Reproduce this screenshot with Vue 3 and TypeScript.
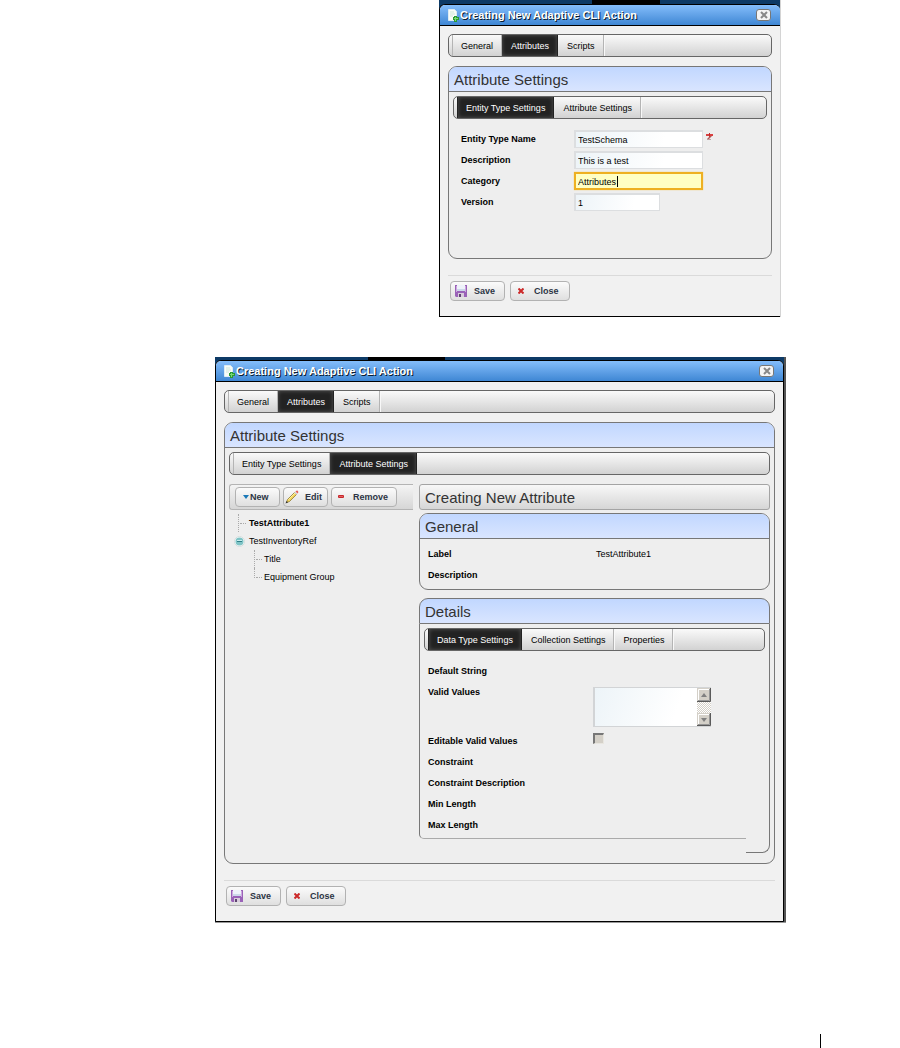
<script setup lang="ts">
import { ref } from 'vue'

interface Field {
  id: string
  label: string
  value: string
  kind?: 'focus' | 'short'
  required?: boolean
}

const mainTabs = ['General', 'Attributes', 'Scripts']
const settingTabs = ['Entity Type Settings', 'Attribute Settings']
const detailTabs = ['Data Type Settings', 'Collection Settings', 'Properties']

const firstTab = ref(1)
const firstSub = ref(0)
const secondTab = ref(1)
const secondSub = ref(1)
const detailTab = ref(0)

const fields = ref<Field[]>([
  { id: 'entity-name', label: 'Entity Type Name', value: 'TestSchema', required: true },
  { id: 'entity-desc', label: 'Description', value: 'This is a test' },
  { id: 'entity-cat', label: 'Category', value: 'Attributes', kind: 'focus' },
  { id: 'entity-ver', label: 'Version', value: '1', kind: 'short' },
])

const validValues = ref('')
const trailing = ['Constraint', 'Constraint Description', 'Min Length', 'Max Length']
</script>

<template>
  <main class="page">
    <section class="shot shot-a">
      <div class="dialog">
        <header class="titlebar">
          <svg class="doc" viewBox="0 0 12 14" aria-hidden="true">
            <path d="M1.500 1.500h6l2 2v9h-8z" fill="#f8fcf8" stroke="#dcecf4" />
            <path d="M3 4h4M3 6h5M3 8h3" stroke="#cfe6da" />
            <path d="M8.500 8v6M6 10.500h6" stroke="#2a9a34" stroke-width="3" />
            <path d="M8.500 9v4M7 10.500h4" stroke="#7ada78" />
          </svg>
          <h1>Creating New Adaptive CLI Action</h1>
          <button class="x" type="button" aria-label="Close window">
            <svg viewBox="0 0 8 8"><path d="M1 1l6 6M7 1l-6 6" stroke="#888" stroke-width="2" /></svg>
          </button>
        </header>
        <div class="content">
          <div class="tabs" role="tablist">
            <button v-for="(t, i) in mainTabs" :key="t" type="button" role="tab" :class="{ on: i === firstTab }" :aria-selected="i === firstTab" @click="firstTab = i">{{ t }}</button>
          </div>
          <section class="panel">
            <h2>Attribute Settings</h2>
            <div class="inset">
              <div class="tabs" role="tablist">
                <button v-for="(t, i) in settingTabs" :key="t" type="button" role="tab" :class="{ on: i === firstSub }" :aria-selected="i === firstSub" @click="firstSub = i">{{ t }}</button>
              </div>
              <form class="form" @submit.prevent>
                <div v-for="f in fields" :key="f.id" class="field">
                  <label :for="f.id">{{ f.label }}</label>
                  <span class="entry" :class="f.kind">
                    <input :id="f.id" v-model="f.value" type="text" />
                    <i v-if="f.kind === 'focus'" class="caret"></i>
                  </span>
                  <svg v-if="f.required" class="req" viewBox="0 0 7 8" aria-hidden="true">
                    <path d="M0 1h7v2H0z" fill="#d84040" />
                    <path d="M3 0h1v4H3z" fill="#c02828" />
                    <path d="M4 3h2L3 6H1z" fill="#b05858" />
                    <path d="M1 6h4v1H1z" fill="#c0a0a0" />
                  </svg>
                </div>
              </form>
            </div>
          </section>
          <footer class="actions">
            <button class="btn save" type="button">
              <svg viewBox="0 0 12 12" aria-hidden="true"><path d="M0 0h12v12H1L0 11z" fill="#9a62b8" /><path d="M1 1h1v6H1zM10 1h1v6h-1z" fill="#cfa8e0" /><path d="M2 0h8v6H2z" fill="#eef2fa" /><path d="M2 4h8v2H2z" fill="#ccd8ea" /><path d="M3 8h6v4H3z" fill="#d8ccdc" /><path d="M4 9h2v3H4z" fill="#5e4470" /></svg>Save
            </button>
            <button class="btn close" type="button">
              <svg viewBox="0 0 6 6" aria-hidden="true"><path d="M0.500 0.500l5 5M5.500 0.500l-5 5" stroke="#cc2929" stroke-width="2" /></svg>Close
            </button>
          </footer>
        </div>
      </div>
    </section>

    <section class="shot shot-b">
      <div class="dialog">
        <header class="titlebar">
          <svg class="doc" viewBox="0 0 12 14" aria-hidden="true">
            <path d="M1.500 1.500h6l2 2v9h-8z" fill="#f8fcf8" stroke="#dcecf4" />
            <path d="M3 4h4M3 6h5M3 8h3" stroke="#cfe6da" />
            <path d="M8.500 8v6M6 10.500h6" stroke="#2a9a34" stroke-width="3" />
            <path d="M8.500 9v4M7 10.500h4" stroke="#7ada78" />
          </svg>
          <h1>Creating New Adaptive CLI Action</h1>
          <button class="x" type="button" aria-label="Close window">
            <svg viewBox="0 0 8 8"><path d="M1 1l6 6M7 1l-6 6" stroke="#888" stroke-width="2" /></svg>
          </button>
        </header>
        <div class="content">
          <div class="tabs" role="tablist">
            <button v-for="(t, i) in mainTabs" :key="t" type="button" role="tab" :class="{ on: i === secondTab }" :aria-selected="i === secondTab" @click="secondTab = i">{{ t }}</button>
          </div>
          <section class="panel">
            <h2>Attribute Settings</h2>
            <div class="inset tall">
              <div class="tabs" role="tablist">
                <button v-for="(t, i) in settingTabs" :key="t" type="button" role="tab" :class="{ on: i === secondSub }" :aria-selected="i === secondSub" @click="secondSub = i">{{ t }}</button>
              </div>
              <div class="columns">
                <div class="side">
                  <div class="toolbar">
                    <button class="btn new" type="button">
                      <svg viewBox="0 0 6 4" aria-hidden="true"><path d="M0 0h6L3 4z" fill="#1a78b8" /></svg>New
                    </button>
                    <button class="btn edit" type="button">
                      <svg viewBox="0 0 14 14" aria-hidden="true"><path d="M1.500 12.500l1-3L9.500 2.500l2 2L4.500 11.500z" fill="#f2d45c" stroke="#8f7a34" stroke-width="0.800" /><path d="M3.500 9.500l6.500-6.500" stroke="#fff2a0" /><path d="M9.300 2.700l1.200-1.200 2 2-1.200 1.200z" fill="#d8d8e0" /><path d="M10.500 1.500Q12 0 13 1t-0.500 2.500z" fill="#e8605a" /><path d="M0.500 13.500l1-2.500 1.500 1.500z" fill="#333" /></svg>Edit
                    </button>
                    <button class="btn remove" type="button">
                      <svg viewBox="0 0 6 4" aria-hidden="true"><rect width="6" height="3" rx="1" fill="#c8282c" /><path d="M1 1.500h4" stroke="#e87070" stroke-width="0.800" /></svg>Remove
                    </button>
                  </div>
                  <ul class="tree">
                    <li class="leaf first"><b>TestAttribute1</b></li>
                    <li>
                      <div class="node">
                        <svg viewBox="0 0 11 11" aria-hidden="true"><circle cx="5.500" cy="5.500" r="5" fill="#fff" stroke="#d4dcdc" /><circle cx="5.500" cy="5.500" r="4" fill="#7fc4c6" /><path d="M3 5.500h5" stroke="#2f7f88" /><path d="M3 4.500h5" stroke="#c8eeee" /></svg>TestInventoryRef
                      </div>
                      <ul>
                        <li class="leaf">Title</li>
                        <li class="leaf last">Equipment Group</li>
                      </ul>
                    </li>
                  </ul>
                </div>
                <div class="detail">
                  <h2 class="plain">Creating New Attribute</h2>
                  <section class="panel">
                    <h2>General</h2>
                    <dl class="rows">
                      <div class="row"><dt>Label</dt><dd>TestAttribute1</dd></div>
                      <div class="row"><dt>Description</dt><dd></dd></div>
                    </dl>
                  </section>
                  <section class="stepped">
                    <h2>Details</h2>
                    <div class="stepped-tabs">
                      <div class="tabs" role="tablist">
                        <button v-for="(t, i) in detailTabs" :key="t" type="button" role="tab" :class="{ on: i === detailTab }" :aria-selected="i === detailTab" @click="detailTab = i">{{ t }}</button>
                      </div>
                    </div>
                    <div class="split">
                      <div class="split-main">
                        <div class="row"><span class="key">Default String</span></div>
                        <div class="row area">
                          <label class="key" for="valid-values">Valid Values</label>
                          <span class="box">
                            <textarea id="valid-values" v-model="validValues"></textarea>
                            <svg class="scroll" viewBox="0 0 14 38" aria-hidden="true">
                              <defs><pattern id="mesh" width="2" height="2" patternUnits="userSpaceOnUse"><rect width="2" height="2" fill="#fff" /><rect width="1" height="1" fill="#d4d0c8" /><rect x="1" y="1" width="1" height="1" fill="#d4d0c8" /></pattern></defs>
                              <rect width="14" height="38" fill="url(#mesh)" />
                              <path d="M0 0h14v14H0zM0 25h14v13H0z" fill="#d4d0c8" />
                              <path d="M1.500 13V1.500H12M1.500 37V26.500H12" fill="none" stroke="#fff" />
                              <path d="M0 13.500h13.500V0M0 37.500h13.500V25" fill="none" stroke="#5a5a5a" />
                              <path d="M1 12.500h11.500V1M1 36.500h11.500V26" fill="none" stroke="#969696" />
                              <path d="M4 9h6L7 5zM4 30h6l-3 4z" fill="#808080" />
                            </svg>
                          </span>
                        </div>
                        <div class="row"><label class="key" for="editable">Editable Valid Values</label><input id="editable" class="check" type="checkbox" /></div>
                        <div v-for="t in trailing" :key="t" class="row"><span class="key">{{ t }}</span></div>
                      </div>
                      <div class="split-edge"></div>
                    </div>
                  </section>
                </div>
              </div>
            </div>
          </section>
          <footer class="actions">
            <button class="btn save" type="button">
              <svg viewBox="0 0 12 12" aria-hidden="true"><path d="M0 0h12v12H1L0 11z" fill="#9a62b8" /><path d="M1 1h1v6H1zM10 1h1v6h-1z" fill="#cfa8e0" /><path d="M2 0h8v6H2z" fill="#eef2fa" /><path d="M2 4h8v2H2z" fill="#ccd8ea" /><path d="M3 8h6v4H3z" fill="#d8ccdc" /><path d="M4 9h2v3H4z" fill="#5e4470" /></svg>Save
            </button>
            <button class="btn close" type="button">
              <svg viewBox="0 0 6 6" aria-hidden="true"><path d="M0.500 0.500l5 5M5.500 0.500l-5 5" stroke="#cc2929" stroke-width="2" /></svg>Close
            </button>
          </footer>
        </div>
      </div>
    </section>
    <div class="rule"></div>
  </main>
</template>

<style>
body { margin: 0; background: #fff; }
</style>

<style scoped>
* { box-sizing: border-box; }
.page {
  display: flex;
  flex-direction: column;
  min-height: 100vh;
  font: 9px/12px "Liberation Sans", Arial, sans-serif;
  color: #000;
}
button, input, textarea { font: inherit; color: inherit; margin: 0; }
h1, h2, ul, dl, dd { margin: 0; padding: 0; }
ul { list-style: none; }
svg { display: block; flex: none; }

.shot-a {
  margin: 0 119px 40px 439px;
  padding-top: 4px;
  border-right: 1px solid #d4d4d4;
  background: linear-gradient(90deg, #0d3a66 153px, #000 153px, #000 221px, #0d3a66 221px);
}
.shot-b {
  margin: 0 114px 0 215px;
  padding: 3px 2px 0 0;
  border-bottom: 1px solid #999;
  background: linear-gradient(90deg, #0d3a66 153px, #000 153px, #000 230px, #0d3a66 230px);
  box-shadow: inset -2px 0 #555;
}
.dialog {
  border: 1px solid #000;
  border-radius: 6px 6px 0 0;
  background: #f1f1f1;
  overflow: hidden;
}
.shot-a .dialog { border-right: 0; }
.titlebar {
  display: flex;
  align-items: center;
  height: 21px;
  padding: 0 9px 0 7px;
  border-bottom: 1px solid #000;
  background: linear-gradient(#84bdfb, #3f87d4);
}
.doc { width: 12px; height: 14px; }
h1 {
  flex: 1;
  margin-left: 1px;
  font-size: 11px;
  line-height: 14px;
  color: #fff;
  text-shadow: 1px 1px #0a1c30;
  white-space: nowrap;
}
.x {
  display: flex;
  align-items: center;
  justify-content: center;
  width: 15px;
  height: 12px;
  padding: 0;
  border: 1px solid #777;
  border-radius: 3px;
  background: #f4f4f4;
}
.x svg { width: 8px; height: 8px; }
.content { padding: 8px 8px 15px; }

.tabs {
  display: flex;
  height: 23px;
  padding-left: 3px;
  border: 1px solid #666;
  border-radius: 5px;
  background: linear-gradient(#fafafa, #d2d2d2);
}
.tabs button {
  padding: 0 8px 0 9px;
  border: 0;
  border-right: 1px solid #b4b4b4;
  box-shadow: 1px 0 #f8f8f8;
  background: none;
  white-space: nowrap;
}
.tabs button:first-child { padding-left: 8px; border-left: 1px solid #b4b4b4; }
.tabs button.on {
  color: #fff;
  border-color: #222;
  background: #222;
  box-shadow: inset 0 0 4px #555;
}

.panel { border: 1px solid #777; border-radius: 9px; background: #eee; }
.content > .panel { margin-top: 9px; }
h2 {
  height: 25px;
  padding-left: 5px;
  border-bottom: 1px solid #777;
  border-radius: 8px 8px 0 0;
  background: linear-gradient(#c1d7ff, #d9e5ff);
  font-size: 15px;
  font-weight: normal;
  line-height: 25px;
  color: #333;
  white-space: nowrap;
}
.inset { padding: 4px 4px 47px; }
.inset.tall { padding-bottom: 10px; }

.form { display: grid; gap: 3px; padding: 11px 0 0 8px; }
.field { display: flex; height: 18px; align-items: center; }
.field label { width: 113px; font-weight: bold; }
.entry { position: relative; width: 129px; height: 18px; }
.entry.short { width: 86px; }
.entry input {
  display: block;
  width: 100%;
  height: 18px;
  padding: 1px 2px 0;
  border: 2px solid #dcdee0;
  border-right-width: 1px;
  border-bottom-width: 1px;
  border-radius: 0;
  background: linear-gradient(100deg, #edf4f8, #fff 70%);
  outline: 0;
}
.entry.focus input { border: 2px solid #eeb022; background: #ffffc4; box-shadow: 0 0 1px #f0c050; }
.caret { position: absolute; left: 43px; top: 4px; width: 1px; height: 11px; background: #000; }
.req { width: 7px; height: 8px; margin: 0 0 5px 3px; }

.actions {
  display: flex;
  gap: 5px;
  margin-top: 16px;
  padding: 5px 0 0 2px;
  border-top: 1px solid #dadada;
}
.btn {
  display: flex;
  align-items: center;
  height: 20px;
  padding: 0;
  border: 1px solid #b2b2b2;
  border-radius: 4px;
  background: linear-gradient(#fbfbfb, #dfdfdf);
  font-weight: bold;
  color: #2c3444;
  white-space: nowrap;
}
.save { width: 55px; padding-left: 4px; gap: 7px; }
.save svg { width: 12px; height: 12px; }
.close { width: 60px; padding-left: 7px; gap: 10px; }
.close svg { width: 6px; height: 6px; }

.columns { display: flex; gap: 6px; margin-top: 9px; }
.side { width: 184px; flex: none; }
.detail { flex: 1; min-width: 0; }
.toolbar {
  display: flex;
  align-items: center;
  gap: 3px;
  height: 26px;
  padding-left: 5px;
  border: 1px solid #b4b4b4;
  border-right: 0;
  border-radius: 3px 0 0 3px;
  background: linear-gradient(#f4f4f4, #d6d6d6);
}
.new { width: 45px; padding-left: 7px; gap: 1px; }
.new svg { width: 6px; height: 4px; }
.edit { width: 45px; padding-left: 1px; gap: 6px; }
.edit svg { width: 14px; height: 14px; }
.remove { width: 66px; padding-left: 6px; gap: 9px; }
.remove svg { width: 6px; height: 4px; }

.tree { padding: 4px 0 0 9px; line-height: 18px; }
.tree ul { padding-left: 16px; }
.leaf { position: relative; height: 18px; padding-left: 11px; }
.tree ul .leaf { padding-left: 10px; }
.leaf::before {
  content: "";
  position: absolute;
  left: 0;
  top: 0;
  height: 18px;
  border-left: 1px dotted #aaa;
}
.leaf::after {
  content: "";
  position: absolute;
  left: 2px;
  top: 9px;
  width: 6px;
  border-top: 1px dotted #aaa;
}
.leaf.last::before { height: 10px; }
.node { display: flex; align-items: center; gap: 4px; height: 18px; }
.node svg { width: 11px; height: 11px; margin-left: -4px; }

h2.plain {
  height: 26px;
  margin-bottom: 3px;
  border: 1px solid #a4a4a4;
  border-radius: 3px;
  background: linear-gradient(#f8f8f8, #d6d6d6);
}
.rows { padding: 5px 8px 3px; }
.row { display: flex; height: 21px; line-height: 21px; }
dt, .key { width: 165px; flex: none; font-weight: bold; }
dd { padding-left: 3px; }

.stepped { margin-top: 8px; }
.stepped h2 { height: 26px; border: 1px solid #777; border-radius: 9px 9px 0 0; }
.stepped-tabs { padding: 4px 4px 0; border: solid #777; border-width: 0 1px; }
.split { display: flex; }
.split-main {
  flex: 1;
  margin-bottom: 14px;
  padding: 10px 0 2px 8px;
  border-left: 1px solid #777;
  border-bottom: 1px solid #aaa;
  border-radius: 0 0 0 5px;
}
.split-edge {
  width: 24px;
  border-right: 1px solid #777;
  border-bottom: 1px solid #777;
  border-radius: 0 0 8px 0;
}
.row.area { height: 49px; }
.box { position: relative; width: 118px; height: 40px; margin-top: 5px; }
textarea {
  display: block;
  width: 100%;
  height: 100%;
  border: 1px solid #d2d4d6;
  border-left-width: 2px;
  border-radius: 0;
  background: linear-gradient(110deg, #edf4f8, #fff 70%);
  resize: none;
  overflow: hidden;
  outline: 0;
}
.scroll { position: absolute; right: 0; top: 1px; width: 14px; height: 38px; }
.check {
  appearance: none;
  width: 11px;
  height: 11px;
  margin-top: 2px;
  border: 1px solid #e8e6e0;
  border-top: 2px solid #777;
  border-left: 2px solid #777;
  background: #d4d0c8;
}
.rule { width: 1px; height: 14px; margin: auto 79px 0 auto; background: #000; }
</style>
